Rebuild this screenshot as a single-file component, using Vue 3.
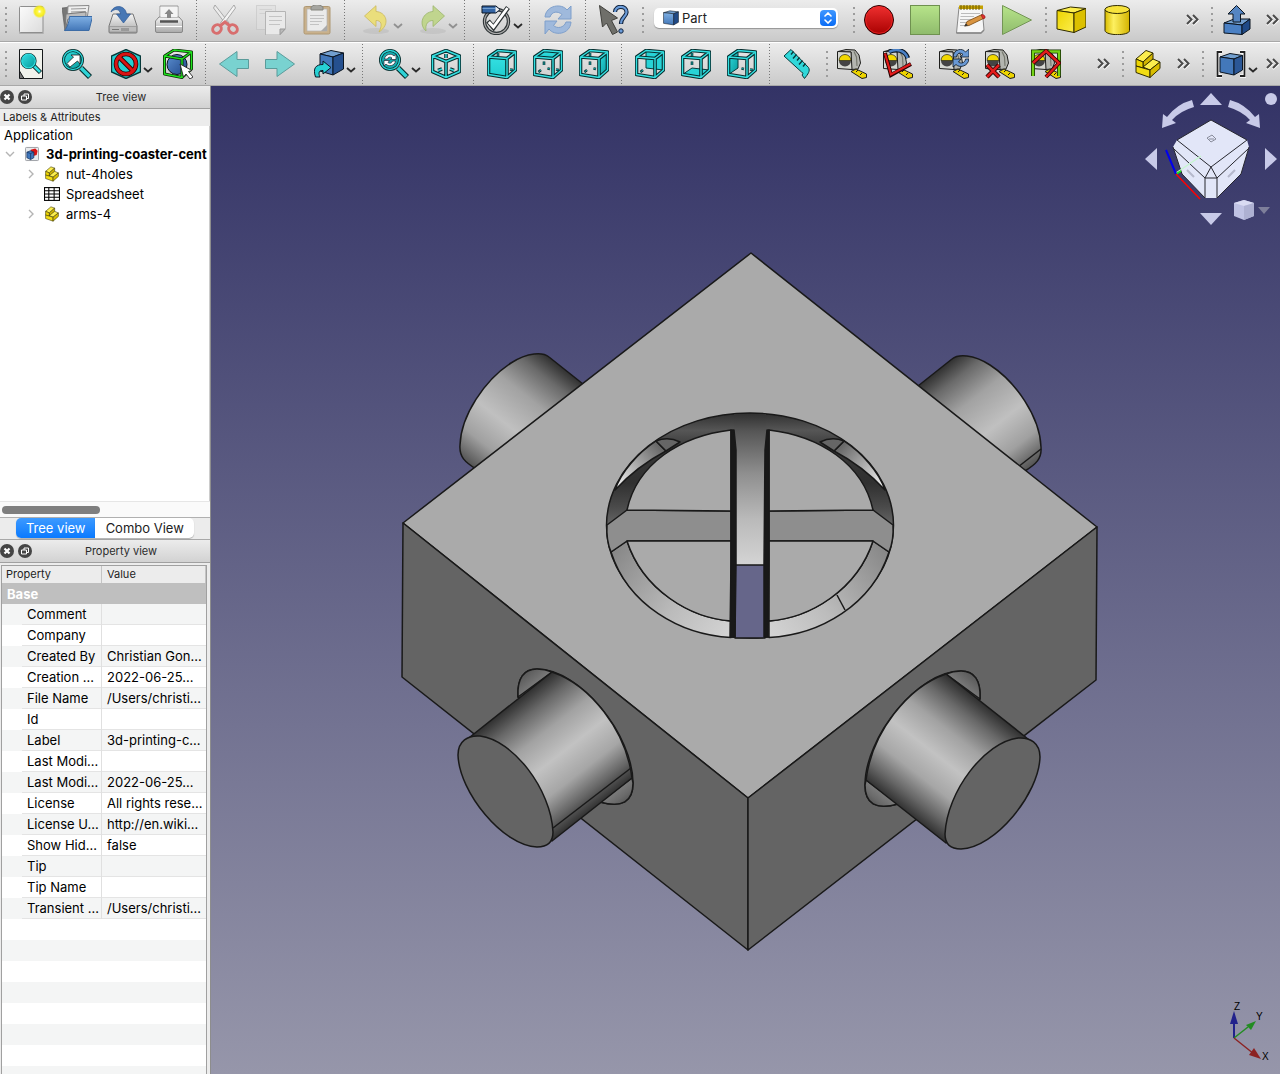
<script setup>
import { ref } from 'vue'

const workbench = ref('Part')
const activeTab = ref('Tree view')

const fileTools = [
  { type: 'handle' },
  { icon: 'new', label: 'New' },
  { icon: 'open', label: 'Open' },
  { icon: 'save', label: 'Save' },
  { icon: 'print', label: 'Print' },
  { type: 'sep' },
  { icon: 'cut', label: 'Cut' },
  { icon: 'copy', label: 'Copy' },
  { icon: 'paste', label: 'Paste' },
  { type: 'sep' },
  { icon: 'undo', label: 'Undo', menu: true, off: true },
  { icon: 'redo', label: 'Redo', menu: true, off: true },
  { type: 'sep' },
  { icon: 'validate', label: 'Edit mode', menu: true },
  { type: 'sep' },
  { icon: 'refresh', label: 'Refresh' },
  { type: 'sep' },
  { icon: 'whatsthis', label: "What's this?" },
  { type: 'handle' },
  { type: 'combo' },
  { type: 'handle' },
  { icon: 'record', label: 'Record macro' },
  { icon: 'stop', label: 'Stop macro' },
  { icon: 'macros', label: 'Macros' },
  { icon: 'play', label: 'Execute macro' },
  { type: 'handle' },
  { icon: 'box', label: 'Cube' },
  { icon: 'cylinder', label: 'Cylinder' },
  { type: 'spacer' },
  { type: 'more' },
  { type: 'handle', wide: true },
  { icon: 'extrude', label: 'Extrude' },
  { type: 'more' },
]

const viewTools = [
  { type: 'handle' },
  { icon: 'fitall', label: 'Fit all' },
  { icon: 'fitsel', label: 'Fit selection' },
  { icon: 'drawstyle', label: 'Draw style', menu: true },
  { icon: 'bbox', label: 'Bounding box' },
  { type: 'sep' },
  { icon: 'back', label: 'Back' },
  { icon: 'forward', label: 'Forward' },
  { icon: 'linked', label: 'Go to linked object', menu: true },
  { type: 'sep' },
  { icon: 'sync', label: 'Sync view', menu: true },
  { icon: 'iso', label: 'Isometric' },
  { type: 'sep' },
  { icon: 'face-front', label: 'Front' },
  { icon: 'face-top', label: 'Top' },
  { icon: 'face-right', label: 'Right' },
  { type: 'sep' },
  { icon: 'face-rear', label: 'Rear' },
  { icon: 'face-bottom', label: 'Bottom' },
  { icon: 'face-left', label: 'Left' },
  { type: 'sep' },
  { icon: 'ruler', label: 'Measure distance' },
  { type: 'handle' },
  { icon: 'linear', label: 'Measure linear' },
  { icon: 'angular', label: 'Measure angular' },
  { type: 'sep' },
  { icon: 'mrefresh', label: 'Refresh measurements' },
  { icon: 'mclear', label: 'Clear measurements' },
  { icon: 'mtoggle', label: 'Toggle measurements' },
  { type: 'spacer' },
  { type: 'more' },
  { type: 'handle', wide: true },
  { icon: 'part', label: 'Create part' },
  { type: 'more' },
  { type: 'handle', wide: true },
  { icon: 'compound', label: 'Compound', menu: true },
  { type: 'more' },
]

const bars = [fileTools, viewTools]

const cubeFaces = {
  front: '1.5,8 20,9.5 20,28.5 1.5,25.5',
  top: '1.5,8 20,9.5 28.5,3 11,1.5',
  right: '20,9.5 28.5,3 28.5,21 20,28.5',
  rear: '11,1.5 28.5,3 28.5,21 11,19',
  bottom: '1.5,25.5 20,28.5 28.5,21 11,19',
  left: '1.5,8 11,1.5 11,19 1.5,25.5',
}
const wire = 'M1.5 8L20 9.5V28.5L1.5 25.5ZM1.5 8L11 1.5L28.5 3L20 9.5M28.5 3V21L20 28.5'
const stubs = {
  front: 'M11 4V7M23 20.5L26 21',
  top: 'M11 12.5V16M5.5 23L8 21M14.500 19.500L17 20M23 20.5L26 21',
  right: 'M11 4V7M11 12.500V16M5.5 23L8 21M14.500 19.500L17 20',
  rear: 'M5.5 23L8 21',
  bottom: 'M11 4V7M11 12.500V16',
  left: 'M14.500 19.500L17 20M23 20.5L26 21',
}

const tree = [
  { name: 'nut-4holes', icon: 'part', open: true },
  { name: 'Spreadsheet', icon: 'sheet', open: false },
  { name: 'arms-4', icon: 'part', open: true },
]

const properties = [
  ['Comment', ''],
  ['Company', ''],
  ['Created By', 'Christian Gon...'],
  ['Creation ...', '2022-06-25...'],
  ['File Name', '/Users/christi...'],
  ['Id', ''],
  ['Label', '3d-printing-c...'],
  ['Last Modi...', ''],
  ['Last Modi...', '2022-06-25...'],
  ['License', 'All rights rese...'],
  ['License U...', 'http://en.wiki...'],
  ['Show Hid...', 'false'],
  ['Tip', ''],
  ['Tip Name', ''],
  ['Transient ...', '/Users/christi...'],
]
</script>

<template>
  <div class="app">
    <svg class="defs" width="0" height="0" aria-hidden="true">
      <defs>
        <linearGradient id="paper" x1="0" y1="0" x2="1" y2="1"><stop offset="0" stop-color="#fbfbfb" /><stop offset="1" stop-color="#dcdcdc" /></linearGradient>
        <radialGradient id="sun"><stop offset="0" stop-color="#fff" /><stop offset=".3" stop-color="#fdf74a" /><stop offset=".7" stop-color="#f6ec20" /><stop offset="1" stop-color="#f6ec20" stop-opacity="0" /></radialGradient>
        <linearGradient id="blueF" x1="0" y1="0" x2="0" y2="1"><stop offset="0" stop-color="#7fb0e4" /><stop offset="1" stop-color="#4377b8" /></linearGradient>
        <linearGradient id="blueD" x1="0" y1="0" x2="1" y2="1"><stop offset="0" stop-color="#5b8fd0" /><stop offset="1" stop-color="#20478a" /></linearGradient>
        <linearGradient id="metal" x1="0" y1="0" x2="0" y2="1"><stop offset="0" stop-color="#f4f4f4" /><stop offset="1" stop-color="#a9a9a9" /></linearGradient>
        <linearGradient id="redG" x1="0" y1="0" x2="0" y2="1"><stop offset="0" stop-color="#f03030" /><stop offset="1" stop-color="#a80000" /></linearGradient>
        <linearGradient id="greenG" x1="0" y1="0" x2="0" y2="1"><stop offset="0" stop-color="#b7e48a" /><stop offset="1" stop-color="#8fbb6c" /></linearGradient>
        <linearGradient id="yel" x1="0" y1="0" x2="1" y2="1"><stop offset="0" stop-color="#edd400" /><stop offset="1" stop-color="#fcee4e" /></linearGradient>
        <linearGradient id="yelC" x1="0" y1="0" x2="1" y2="0"><stop offset="0" stop-color="#d9bc00" /><stop offset=".35" stop-color="#fdf060" /><stop offset="1" stop-color="#d4b400" /></linearGradient>
        <linearGradient id="cy" x1="0" y1="0" x2="1" y2="1"><stop offset="0" stop-color="#34e0e2" /><stop offset="1" stop-color="#06989a" /></linearGradient>
        <linearGradient id="cyF" x1="0" y1="0" x2="0" y2="1"><stop offset="0" stop-color="#34e0e2" /><stop offset="1" stop-color="#1fcdd0" /></linearGradient>
      </defs>

      <symbol id="i-new" viewBox="0 0 30 30">
        <rect x="3" y="27" width="25" height="2" rx="1" fill="#999" opacity=".6" />
        <rect x="3.5" y="1.5" width="23.500" height="26" rx="1" fill="url(#paper)" stroke="#8e8e8e" />
        <circle cx="23.500" cy="6.500" r="6.800" fill="url(#sun)" />
      </symbol>
      <symbol id="i-open" viewBox="0 0 30 30">
        <path d="M0 3L8 2V22L3 26Z" fill="#777" stroke="#555" stroke-width=".6" />
        <path d="M6 1L27 0.500L25 14L5 20Z" fill="#eee" stroke="#888" />
        <path d="M9 4L24 3.500M9 7L23.500 6.500" stroke="#999" />
        <path d="M4 9L24 7V14H6L3 25Z" fill="#bdbdbd" stroke="#777" />
        <path d="M7.500 11.500H30.500L27 25.500H2.500C5 23 7 18 7.500 11.500Z" fill="url(#blueF)" stroke="#3d6ca6" />
      </symbol>
      <symbol id="i-save" viewBox="0 0 30 30">
        <path d="M5 9H25L29 21V27Q29 28 28 28H2Q1 28 1 27V21Z" fill="url(#metal)" stroke="#777" />
        <path d="M1.500 21.500H28.500V27H1.500Z" fill="#bdbdbd" stroke="#888" stroke-width=".6" />
        <path d="M14 23V26M16 23V26M18 23V26M20 23V26M4 24.500H11" stroke="#777" />
        <path d="M3 7C5 0 17 -1 18.500 9H22.500L15.500 18L8.500 9H12.500C12 4 7 3 3 7Z" fill="#4777b5" stroke="#2f5a96" stroke-width=".7" />
      </symbol>
      <symbol id="i-print" viewBox="0 0 30 30">
        <path d="M6 1H24V14H6Z" fill="#f6f6f6" stroke="#999" />
        <path d="M5 12H25L28.500 16V26Q28.500 27.500 27 27.500H3Q1.500 27.500 1.500 26V16Z" fill="url(#metal)" stroke="#888" />
        <path d="M6.500 12V2H23.500V12Z" fill="#f4f4f4" />
        <path d="M15 4L19.500 9H17V13H13V9H10.500Z" fill="#888" />
        <path d="M6 16.500H24" stroke="#555" stroke-width="2.500" />
        <path d="M2 21.500H28" stroke="#fff" />
      </symbol>
      <symbol id="i-cut" viewBox="0 0 30 30">
        <path d="M5 0L19 18L16.500 20L3.500 3Z" fill="#ececec" stroke="#999" stroke-width=".8" />
        <path d="M24 0L10.500 18L13 20L25.500 3Z" fill="#f4f4f4" stroke="#999" stroke-width=".8" />
        <g fill="none" stroke="#d86e6e" stroke-width="3"><ellipse cx="7" cy="24" rx="4.500" ry="4" transform="rotate(-40 7 24)" /><ellipse cx="23" cy="24" rx="4.500" ry="4" transform="rotate(40 23 24)" /><path d="M10.500 20.500L15 17L19.500 20.500" /></g>
      </symbol>
      <symbol id="i-copy" viewBox="0 0 30 30">
        <g stroke="#c4c4c4" fill="#e0e0e0"><rect x=".500" y=".500" width="19" height="24" opacity=".6" /><path d="M3.500 4.500H16M3.500 8.500H16" opacity=".5" /><path d="M9.500 6.500H29.500V24L24 30H9.500Z" fill="#e9e9e9" stroke="#b4b4b4" /><path d="M13 11.500H26M13 15.500H26M13 19.500H24" /><path d="M29 24H24V29.500Z" fill="#bbb" stroke="#999" /></g>
      </symbol>
      <symbol id="i-paste" viewBox="0 0 30 30">
        <rect x="2" y="1.500" width="26" height="27.500" rx="1.500" fill="#c9b18c" stroke="#ae9772" />
        <path d="M5 4H25V26H5Z" fill="#eaeaea" stroke="#b4b4b4" stroke-width=".7" /><path d="M25 20L19 26H25Z" fill="#aaa" />
        <path d="M8 10.500H22M8 13.500H22M8 16.500H20M8 19.500H17" stroke="#c2c2c2" />
        <path d="M9 5V2Q15 -3 21 2V5Z" fill="#a5a5a0" stroke="#85857f" />
      </symbol>
      <symbol id="i-undo" viewBox="0 0 30 30">
        <ellipse cx="15" cy="26" rx="13" ry="3" fill="#aaa" opacity=".3" />
        <path d="M3.500 11L15 .700V6.500C25 7 30 19 18 27C22 19 20 15.500 15 15.500V21.500Z" fill="#eade7c" stroke="#cbb95c" stroke-width=".8" />
      </symbol>
      <symbol id="i-redo" viewBox="0 0 30 30">
        <ellipse cx="17" cy="26" rx="13" ry="3" fill="#aaa" opacity=".3" />
        <path d="M28.500 11L17 .700V6.500C7 7 2 19 10 26C9 19 12 15.500 17 15.500V21.500Z" fill="#c0d58e" stroke="#9cb56c" stroke-width=".8" />
      </symbol>
      <symbol id="i-validate" viewBox="0 0 30 30">
        <circle cx="15.500" cy="16.500" r="12" fill="none" stroke="#2e3436" stroke-width="3.400" /><circle cx="15.500" cy="16.500" r="12" fill="none" stroke="#aaa" stroke-width="1.200" />
        <path d="M7 16L12.500 22.500L27 2.500" fill="none" stroke="#2e3436" stroke-width="4.800" /><path d="M7.800 17L12.500 22L26.500 3" fill="none" stroke="#fff" stroke-width="2.800" />
        <path d="M1 1H15L19 4.500L15 8H1Z" fill="#3465a4" stroke="#0b1521" /><path d="M1.500 3.500H14.500" stroke="#729fcf" /><path d="M14.500 1.500L18.500 4.500L14.500 7.500Z" fill="#eee" />
      </symbol>
      <symbol id="i-refresh" viewBox="0 0 30 30">
        <path d="M2 12C3 0 19 -2 24 5L28 1V14H15L19 9.500C15 6 9 6 7 12Z" fill="#9fb9dc" stroke="#7e9fcb" />
        <path d="M28 17C27 30 11 31 6 24L2 29V16H14L10.500 20.500C14 24 21 23 23 17Z" fill="#9fb9dc" stroke="#7e9fcb" />
      </symbol>
      <symbol id="i-whatsthis" viewBox="0 0 30 30">
        <path d="M.500 .500L18.500 13L12.500 15.500L18.500 27L13.500 29.500L7.500 18L3.500 22Z" fill="#6f6f6a" stroke="#40403c" />
        <path d="M16 7C16 0 28 0 27.500 7.500C27 12 22 12.500 22 19" fill="none" stroke="#12233c" stroke-width="4.200" /><path d="M16 7C16 0 28 0 27.500 7.500C27 12 22 12.500 22 18.500" fill="none" stroke="#6a9bd8" stroke-width="2.200" />
        <circle cx="22" cy="26" r="2.200" fill="#6a9bd8" stroke="#12233c" />
      </symbol>
      <symbol id="i-record" viewBox="0 0 30 30"><circle cx="15" cy="15" r="14.500" fill="url(#redG)" stroke="#280000" /><circle cx="15" cy="15" r="13.300" fill="none" stroke="#ef2929" opacity=".7" /></symbol>
      <symbol id="i-stop" viewBox="0 0 30 30"><rect x=".500" y=".500" width="29" height="29" fill="url(#greenG)" stroke="#6f9150" /></symbol>
      <symbol id="i-play" viewBox="0 0 30 30"><path d="M.500 .500L29.500 15L.500 29.500Z" fill="url(#greenG)" stroke="#749556" /></symbol>
      <symbol id="i-macros" viewBox="0 0 30 30">
        <path d="M3 2H26L28 25L25 28H.500Z" fill="#f6f6f6" stroke="#888" /><path d="M.500 28H25L28 25" fill="none" stroke="#888" stroke-width="1.500" />
        <path d="M3 .500H27V4H3Z" fill="#c4a000" /><path d="M5 0V5M8 0V5M11 0V5M14 0V5M17 0V5M20 0V5M23 0V5" stroke="#6b5800" />
        <path d="M5 8.500H24M4.500 11.500H18M4 14.500H16M4 17.500H12M4 20.500H9" stroke="#bbb" />
        <path d="M9 21L11 16.500L26 9.500L28.500 13L13 20.500Z" fill="#d99440" stroke="#7a4a12" stroke-width=".8" /><path d="M25 10L27 9.500Q30 11 29 13L27 14Z" fill="#e03030" stroke="#801010" stroke-width=".5" /><path d="M8 21.500L10 18.500L12 20.500Z" fill="#333" />
      </symbol>
      <symbol id="i-box" viewBox="0 0 30 30"><g stroke="#302b00" stroke-linejoin="round"><path d="M1 5.500L14.500 2L30 3.500L18 8Z" fill="#fcee4e" /><path d="M1 5.500L18 8V27.500L1 24Z" fill="url(#yel)" /><path d="M18 8L30 3.500V22L18 27.500Z" fill="#dcc000" /></g></symbol>
      <symbol id="i-cylinder" viewBox="0 0 30 30"><path d="M3 4.500V25.500C3.500 31 27.500 31 27.500 25.500V4.500Z" fill="url(#yelC)" stroke="#302b00" /><ellipse cx="15.250" cy="4.500" rx="12.250" ry="4" fill="#f7e33c" stroke="#302b00" /></symbol>
      <symbol id="i-extrude" viewBox="0 0 30 30"><g stroke="#0b1521" stroke-linejoin="round"><path d="M2 18L12 14H28L20 20Z" fill="#729fcf" /><path d="M2 18L20 20V29.500L2 28Z" fill="#4a80c4" /><path d="M20 20L28 14V24L20 29.500Z" fill="#204a87" /><path d="M14.500 .500L23 9H18.500V17H11V9H6Z" fill="#5585c2" /></g></symbol>

      <symbol id="i-fitall" viewBox="0 0 30 30"><path d="M3.500 .500H26.500V29.500H8L3.500 25Z" fill="#f0f2ec" stroke="#15181a" /><path d="M3.500 22L8 29.500H3.500Z" fill="#777" stroke="#15181a" /><path d="M17 16L24.500 23.500" stroke="#0b2a2b" stroke-width="4.500" /><path d="M17.500 16.500L24 23" stroke="#34e0e2" stroke-width="2.500" /><circle cx="12.500" cy="12" r="6.800" fill="#16a9ab" stroke="#042a2a" stroke-width="2.600" /><circle cx="12.500" cy="12" r="6.800" fill="url(#cy)" stroke="#34e0e2" stroke-width="1.200" /></symbol>
      <symbol id="i-fitsel" viewBox="0 0 30 30"><path d="M19 19L28 28" stroke="#042a2a" stroke-width="5.600" /><path d="M19 19L27.500 27.500" stroke="#2fd3d6" stroke-width="3.600" /><circle cx="11" cy="11" r="9.500" fill="url(#cy)" stroke="#042a2a" stroke-width="3" /><circle cx="11" cy="11" r="9.500" fill="none" stroke="#2bd6d8" stroke-width="1.400" /><path d="M5 14.500L11.500 8L9 6H18V15L15.500 12L8 18Z" fill="#fff" stroke="#222" stroke-width=".8" /></symbol>
      <symbol id="i-drawstyle" viewBox="0 0 30 30"><path d="M15 .500L29.500 7V23L15 29.500L.500 23V7Z" fill="#26cfd2" stroke="#06393a" stroke-width="1.400" /><circle cx="15" cy="15" r="10" fill="none" stroke="#280000" stroke-width="4.600" /><path d="M8 8L22 22" stroke="#280000" stroke-width="4.600" /><circle cx="15" cy="15" r="10" fill="none" stroke="#d81414" stroke-width="3" /><path d="M8 8L22 22" stroke="#d81414" stroke-width="3" /></symbol>
      <symbol id="i-bbox" viewBox="0 0 30 30"><circle cx="14" cy="15.500" r="10" fill="url(#blueD)" stroke="#0b1521" /><g fill="none" stroke-linejoin="round"><path d="M1.500 7L19 10V28.500L1.500 25ZM1.500 7L11 1L28.500 3L19 10M28.500 3V20L19 28.500" stroke="#0c2b05" stroke-width="3" /><path d="M1.500 7L19 10V28.500L1.500 25ZM1.500 7L11 1L28.500 3L19 10M28.500 3V20L19 28.500" stroke="#1fe51f" stroke-width="1.400" /></g><path d="M17 15L29 21.500L25.500 22.500L30 28L27 30L23 25L20.500 28Z" fill="#fff" stroke="#222" stroke-width=".9" /></symbol>
      <symbol id="i-back" viewBox="0 0 30 30"><path d="M.500 15L18 2.500V10.500H29.500V19.500H18V27.500Z" fill="#79d2d0" stroke="#5b9b9a" /></symbol>
      <symbol id="i-forward" viewBox="0 0 30 30"><path d="M29.500 15L12 2.500V10.500H.500V19.500H12V27.500Z" fill="#79d2d0" stroke="#5b9b9a" /></symbol>
      <symbol id="i-linked" viewBox="0 0 30 30"><g stroke="#0b1521" stroke-linejoin="round"><path d="M6 5L17 1.500L29.500 4L19 8Z" fill="#729fcf" /><path d="M6 5L19 8V26L6 22Z" fill="#4378ba" /><path d="M19 8L29.500 4V20L19 26Z" fill="#25508f" /><path d="M1.500 28C-1.500 19 2 15.500 9 15.500V12L17 18.500L9 25V21.500C5 21 4 24 6 28Z" fill="#27d1d4" /></g></symbol>
      <symbol id="i-sync" viewBox="0 0 30 30"><path d="M19 19L28 28" stroke="#042a2a" stroke-width="5.600" /><path d="M19 19L27.500 27.500" stroke="#2fd3d6" stroke-width="3.600" /><circle cx="11" cy="11" r="9.500" fill="#17aeb0" stroke="#042a2a" stroke-width="3" /><circle cx="11" cy="11" r="9.500" fill="none" stroke="#2bd6d8" stroke-width="1.400" /><path d="M5.500 10C6 5 13 4 15 7L17 5.500V10.500H11.500L13 9C11 7.500 9 8 8.500 10ZM16.500 12C16 17 9 18 7 15L5 17V11.500H10.500L9 13.500C11 15 13 14 13.500 12Z" fill="#fff" stroke="#223" stroke-width=".7" /></symbol>
      <symbol id="i-iso" viewBox="0 0 30 30"><g fill="none" stroke-linejoin="round"><path d="M15 1.500L28.500 7V22.500L15 28.500L1.500 22.500V7ZM1.500 7L15 12.500L28.500 7M15 12.500V28.500M15 5V9M7 21.500L11 20M19 20L23 21.500" stroke="#062e2f" stroke-width="3.600" /><path d="M15 1.500L28.500 7V22.500L15 28.500L1.500 22.500V7ZM1.500 7L15 12.500L28.500 7M15 12.500V28.500M15 5V9M7 21.500L11 20M19 20L23 21.500" stroke="#34e0e2" stroke-width="1.400" /></g></symbol>
      <symbol v-for="(pts, face) in cubeFaces" :id="'i-face-' + face" :key="face" viewBox="0 0 30 30">
        <polygon v-if="face === 'rear' || face === 'bottom' || face === 'left'" :points="pts" :fill="face === 'left' ? 'url(#cy)' : '#27d3d6'" stroke="#073a3b" />
        <g fill="none" stroke-linejoin="round">
          <path :d="stubs[face]" stroke="#062e2f" stroke-width="2.600" />
          <path :d="stubs[face]" stroke="#1aa5a7" />
        </g>
        <polygon v-if="face === 'front' || face === 'top' || face === 'right'" :points="pts" :fill="face === 'right' ? 'url(#cy)' : 'url(#cyF)'" />
        <g fill="none" stroke-linejoin="round">
          <path :d="wire" stroke="#062e2f" stroke-width="3.600" />
          <path :d="wire" stroke="#34e0e2" stroke-width="1.400" />
        </g>
      </symbol>
      <symbol id="i-ruler" viewBox="0 0 30 30"><path d="M8 .500L25.500 18.500C27.500 22 25 25 21.500 29.500L19 26C20.500 24.500 20 23.500 18.500 23L1 7Z" fill="#30d8da" stroke="#073a3b" /><path d="M10.500 2.500L8 5.500M13.500 5.500L10 9.500M16.500 8.500L14 11.500M19.500 11.500L16 15.500M22.500 14.500L20 17.500" stroke="#073a3b" stroke-width="1.400" /></symbol>
      <symbol id="i-linear" viewBox="0 0 30 30"><g stroke="#1e1e1c" stroke-linejoin="round"><path d="M1 2.500L9 .500L18 1L22 6L23.500 14L21 20L14 20.500V3Z" fill="#b3b5af" /><path d="M17 2.500L19.500 8L20 17" fill="none" stroke="#77796f" stroke-width="1.200" /><path d="M.500 2.500L14 3L15 20.500L.500 19.500Z" fill="#d6d8d2" /><path d="M14 22.500L19 20L29.500 25V28.500L25 29.500Z" fill="#edd400" /><path d="M19 23L21 21M23 26L25 24" /></g><circle cx="8" cy="11.500" r="6" fill="#444" /><path d="M2 11.500A6 6 0 0 1 14 11.500Z" fill="#f2d900" stroke="#1e1e1c" stroke-width=".6" /></symbol>
      <symbol id="i-angular" viewBox="0 0 30 30"><use href="#i-linear" /><path d="M6 3C13 -1 22 1 25 9" fill="none" stroke="#0b1521" stroke-width="4.500" /><path d="M6 3C13 -1 22 1 24.500 9" fill="none" stroke="#4a80c4" stroke-width="2.500" /><path d="M2 4L8 26L28 15" fill="none" stroke="#280000" stroke-width="4" /><path d="M2 4.500L8 25.500L27.500 15" fill="none" stroke="#e31b1b" stroke-width="2.200" /></symbol>
      <symbol id="i-mrefresh" viewBox="0 0 30 30"><use href="#i-linear" /><g fill="#6898d4" stroke="#0b1521" stroke-width=".8"><path d="M14 8C15 -1 24 -1 26.500 3L30 0V8H21L24 5.500C21 3 18 4 17.500 8Z" /><path d="M30 10C29 18 20 19 17 15.500L14 18V10H22L19.500 13C22 15 26 14 26.500 10Z" /></g></symbol>
      <symbol id="i-mclear" viewBox="0 0 30 30"><use href="#i-linear" /><path d="M2 16L14 28M14 16L2 28" stroke="#280000" stroke-width="4.500" /><path d="M2 16L14 28M14 16L2 28" stroke="#e31b1b" stroke-width="2.500" /></symbol>
      <symbol id="i-mtoggle" viewBox="0 0 30 30"><use href="#i-linear" /><path d="M2 27V2.500H28V27" fill="none" stroke="#173004" stroke-width="4" /><path d="M2 27V2.500H28V27" fill="none" stroke="#73d216" stroke-width="2.400" /><path d="M2 14L15 2L28 14L15 28" fill="none" stroke="#280000" stroke-width="4" /><path d="M2 14L15 2L28 14L15 28" fill="none" stroke="#e31b1b" stroke-width="2.400" /></symbol>
      <symbol id="i-part" viewBox="0 0 30 30"><g stroke="#302b00" stroke-linejoin="round"><path d="M3 10L13 1.500L20 4L10 13Z" fill="#fcee4e" /><path d="M20 4V10L10 19V13Z" fill="#d3b600" /><path d="M3 10L10 13V19L3 17Z" fill="#edd400" /><path d="M10 18L20 10L27 13L17 21Z" fill="#fcee4e" /><path d="M3 17L17 21V28.500L3 23.500Z" fill="#f2dc14" /><path d="M17 21L27 13V19.500L17 28.500Z" fill="#d9bd00" /></g></symbol>
      <symbol id="i-bluebox" viewBox="0 0 30 30"><g stroke="#0b1521" stroke-linejoin="round"><path d="M1 5L13 1.500L29 3.500L20 7Z" fill="#729fcf" /><path d="M1 5L20 7V28L1 25Z" fill="url(#blueF)" /><path d="M20 7L29 3.500V23L20 28Z" fill="#204a87" /></g></symbol>
      <symbol id="i-compound" viewBox="0 0 30 30"><path d="M6 3H1.500V27H6M24 3H28.500V27H24" fill="none" stroke="#fff" stroke-width="3.600" /><path d="M6 3H1.500V27H6M24 3H28.500V27H24" fill="none" stroke="#222" stroke-width="1.800" /><g stroke="#0b1521" stroke-linejoin="round"><path d="M4 8L14 4.500L26.500 6.500L18 10Z" fill="#729fcf" /><path d="M4 8L18 10V26L4 23Z" fill="#4378ba" /><path d="M18 10L26.500 6.500V21L18 26Z" fill="#2b5796" /></g></symbol>
      <symbol id="i-sheet" viewBox="0 0 30 30"><rect x="1" y="3" width="28" height="24" fill="#fff" stroke="#000" stroke-width="2" /><path d="M1 9H29M1 15H29M1 21H29M9 3V27M19 3V27" stroke="#000" stroke-width="2" /></symbol>
      <symbol id="i-doc" viewBox="0 0 30 30"><rect x="1" y="1" width="28" height="28" rx="2" fill="#e9ebee" stroke="#9a9da2" stroke-width="2" /><path d="M12 6L22 3L27 8L25 17L16 20Z" fill="#d81414" /><path d="M4 11L12 8L19 11V23L12 27L4 23Z" fill="#3f76bb" stroke="#12305c" stroke-width="1.500" /><path d="M4 11L12 14L19 11M12 14V27" stroke="#12305c" fill="none" stroke-width="1.500" /></symbol>
    </svg>

    <header class="bars">
      <div v-for="(bar, b) in bars" :key="b" class="bar" role="toolbar">
        <template v-for="(t, i) in bar" :key="i">
          <span v-if="t.type === 'handle'" class="handle" :class="{ wide: t.wide }"><i v-for="n in 5" :key="n"></i></span>
          <span v-else-if="t.type === 'sep'" class="sep"></span>
          <span v-else-if="t.type === 'spacer'" class="spacer"></span>
          <button v-else-if="t.type === 'more'" class="more" aria-label="More tools">
            <svg width="13" height="12" viewBox="0 0 13 12"><path d="M1 1L6 5.500L1 10M7 1L12 5.500L7 10" fill="none" stroke="#fff" stroke-width="2" transform="translate(0 1)" /><path d="M1 1L5.500 5.500L1 10M7 1L11.500 5.500L7 10" fill="none" stroke="#4a4a4a" stroke-width="2" /></svg>
          </button>
          <label v-else-if="t.type === 'combo'" class="combo">
            <svg class="combo-icon"><use href="#i-bluebox" /></svg>
            <select v-model="workbench" aria-label="Workbench">
              <option>Part</option>
              <option>Part Design</option>
            </select>
            <span class="knob"><svg width="8" height="12" viewBox="0 0 8 12"><path d="M1 4L4 1L7 4M1 8L4 11L7 8" fill="none" stroke="#fff" stroke-width="1.600" stroke-linecap="round" /></svg></span>
          </label>
          <button v-else class="tool" :class="{ menu: t.menu, off: t.off }" :aria-label="t.label">
            <svg class="glyph"><use :href="'#i-' + t.icon" /></svg>
            <svg v-if="t.menu" class="caret" viewBox="0 0 10 6"><path d="M1 1L5 4.500L9 1" fill="none" stroke="#2a2a2a" stroke-width="1.800" /></svg>
          </button>
        </template>
      </div>
    </header>

    <main class="work">
      <aside class="side">
        <section class="dock tree-dock">
          <div class="title">
            <button class="round" aria-label="Close"><svg viewBox="0 0 14 14"><circle cx="7" cy="7" r="7" fill="#454545" /><path d="M4.500 4.500L9.500 9.500M9.500 4.500L4.500 9.500" stroke="#fff" stroke-width="2.200" /></svg></button>
            <button class="round" aria-label="Float"><svg viewBox="0 0 14 14"><circle cx="7" cy="7" r="7" fill="#454545" /><path d="M6 6V4H10.500V8.500H8.500M3.500 6H8.500V10H3.500Z" fill="none" stroke="#fff" /></svg></button>
            <h2>Tree view</h2>
          </div>
          <div class="tree-head">Labels &amp; Attributes</div>
          <div class="tree">
            <div class="node root">Application</div>
            <div class="node doc">
              <svg class="twist" viewBox="0 0 10 10"><path d="M1 3L5 7L9 3" fill="none" stroke="#b4b4b4" stroke-width="1.400" /></svg>
              <svg class="mini"><use href="#i-doc" /></svg><b>3d-printing-coaster-cent</b>
            </div>
            <div v-for="n in tree" :key="n.name" class="node child">
              <svg class="twist" viewBox="0 0 10 10"><path v-if="n.open" d="M3 1L7 5L3 9" fill="none" stroke="#b4b4b4" stroke-width="1.400" /></svg>
              <svg class="mini"><use :href="'#i-' + n.icon" /></svg><span>{{ n.name }}</span>
            </div>
          </div>
          <div class="scroll"><span></span></div>
          <div class="tabs">
            <button v-for="tab in ['Tree view', 'Combo View']" :key="tab" :class="{ on: tab === activeTab }" @click="activeTab = tab">{{ tab }}</button>
          </div>
        </section>

        <section class="dock prop-dock">
          <div class="title">
            <button class="round" aria-label="Close"><svg viewBox="0 0 14 14"><circle cx="7" cy="7" r="7" fill="#454545" /><path d="M4.500 4.500L9.500 9.500M9.500 4.500L4.500 9.500" stroke="#fff" stroke-width="2.200" /></svg></button>
            <button class="round" aria-label="Float"><svg viewBox="0 0 14 14"><circle cx="7" cy="7" r="7" fill="#454545" /><path d="M6 6V4H10.500V8.500H8.500M3.500 6H8.500V10H3.500Z" fill="none" stroke="#fff" /></svg></button>
            <h2>Property view</h2>
          </div>
          <div class="sheet">
            <table>
              <thead><tr><th>Property</th><th>Value</th></tr></thead>
              <tbody>
                <tr class="group"><th colspan="2">Base</th></tr>
                <tr v-for="(p, i) in properties" :key="i">
                  <td><span>{{ p[0] }}</span></td>
                  <td>{{ p[1] }}</td>
                </tr>
              </tbody>
            </table>
            <div class="rest"></div>
          </div>
        </section>
      </aside>

      <section class="view">
        <svg class="scene" viewBox="211 86 1069 988" role="img" aria-label="3D model">
          <defs>
            <linearGradient id="cylBack" gradientUnits="userSpaceOnUse" x1="566" y1="370" x2="484" y2="474"><stop offset="0" stop-color="#303030" /><stop offset=".14" stop-color="#6a6a6a" /><stop offset=".34" stop-color="#a2a2a2" /><stop offset=".6" stop-color="#c0c0c0" /><stop offset=".82" stop-color="#a0a0a0" /><stop offset="1" stop-color="#585858" /></linearGradient>
            <linearGradient id="cylFront" gradientUnits="userSpaceOnUse" x1="472" y1="735" x2="554" y2="840"><stop offset="0" stop-color="#303030" /><stop offset=".14" stop-color="#686868" /><stop offset=".32" stop-color="#a2a2a2" /><stop offset=".52" stop-color="#c2c2c2" /><stop offset=".72" stop-color="#a6a6a6" /><stop offset=".88" stop-color="#666" /><stop offset="1" stop-color="#303030" /></linearGradient>
            <linearGradient id="bore" x1="0" y1="0" x2="1" y2="1"><stop offset="0" stop-color="#4a4a4a" /><stop offset="1" stop-color="#a2a2a2" /></linearGradient>
            <linearGradient id="boreLow" x1="0" y1="0" x2="1" y2="1"><stop offset="0" stop-color="#a2a2a2" /><stop offset=".7" stop-color="#6a6a6a" /><stop offset="1" stop-color="#444" /></linearGradient>
            <linearGradient id="slot" gradientUnits="userSpaceOnUse" x1="0" y1="413" x2="0" y2="565"><stop offset="0" stop-color="#303030" /><stop offset=".12" stop-color="#565656" /><stop offset=".4" stop-color="#8f8f8f" /><stop offset=".7" stop-color="#bababa" /><stop offset="1" stop-color="#d4d4d4" /></linearGradient>
            <linearGradient id="ringTop" gradientUnits="userSpaceOnUse" x1="0" y1="413" x2="0" y2="530"><stop offset="0" stop-color="#303030" /><stop offset=".15" stop-color="#565656" /><stop offset=".3" stop-color="#383838" /><stop offset=".6" stop-color="#303030" /><stop offset=".8" stop-color="#4a4a4a" /><stop offset="1" stop-color="#6c6c6c" /></linearGradient>
            <linearGradient id="ringLow" gradientUnits="userSpaceOnUse" x1="611" y1="545" x2="731" y2="635"><stop offset="0" stop-color="#848484" /><stop offset=".6" stop-color="#bcbcbc" /><stop offset="1" stop-color="#d4d4d4" /></linearGradient>
            <linearGradient id="lens" gradientUnits="userSpaceOnUse" x1="618" y1="485" x2="662" y2="445"><stop offset="0" stop-color="#ececec" /><stop offset="1" stop-color="#606060" /></linearGradient>
          </defs>
          <g stroke="#191919" stroke-width="1.500" stroke-linejoin="round">
            <g id="backArm"><path d="M583 384L549 357C543 352 528 352 511 363C485 380 461 415 460 445C459 457 465 462 476 469L540 440Z" fill="url(#cylBack)" /></g>
            <use href="#backArm" transform="translate(1501 2) scale(-1 1)" />
            <path d="M1041 449L1018 467" fill="none" />
            <path d="M751 253L1097 527L748 798L403 523Z" fill="#aaa" />
            <path d="M403 523L748 798V950L402 677Z" fill="#646464" />
            <path d="M748 798L1097 527L1096 680L748 950Z" fill="#646464" />

            <g id="frontArm">
              <path d="M518 697C517 678 524 669 537 669C580 669 633 735 633 783C633 802 622 808 600 802Z" fill="#646464" />
              <path d="M518 697C517 678 524 669 537 669Q545 669 552 672Z" fill="url(#bore)" />
              <path d="M600 802C622 808 633 802 633 783L632 778Z" fill="url(#boreLow)" />
              <path d="M470 737L552 672C590 685 626 730 632 778L552 841Z" fill="url(#cylFront)" />
              <path d="M458 755C458 741 468 735 480 736C513 740 551 789 553 832C553 842 547 847 537 847C503 846 459 792 458 755Z" fill="#646464" />
            </g>
            <use href="#frontArm" transform="translate(1498 2) scale(-1 1)" />
            <path d="M553 828L631 768" fill="none" />

            <ellipse cx="750" cy="525.500" rx="143.500" ry="112.500" fill="url(#ringTop)" />
            <g id="ringHalf">
              <path d="M611 552C628 605 680 635 731 637.500V621C690 618 643 590 627 541Z" fill="url(#ringLow)" />
              <path d="M607 525L627 510L731 511V541L627 541L611 552Q606 540 607 525Z" fill="#8e8e8e" />
              <path d="M731 430C680 436 637 464 627 510L731 511Z" fill="#aaa" />
              <path d="M627 541C643 590 690 618 731 621V541Z" fill="#aaa" />
              <path d="M615 490C621 472 638 453 656 441L666 451C645 462 628 476 615 490Z" fill="url(#lens)" />
              <path d="M656 441Q668 436 680 442L666 451Z" fill="#666" />
            </g>
            <use href="#ringHalf" transform="translate(1500 0) scale(-1 1)" />
            <path d="M837 595L845 610" />
            <path d="M734 414H766V565H734Z" fill="url(#slot)" stroke="none" />
            <path d="M735 565H765V638H735Z" fill="#66668a" />
            <path d="M731 430L734 430L736 450V565L735 637H730L731 560Z" fill="#191919" />
            <path d="M769 430L767 430L765 450L764 565V637H768L769 560Z" fill="#191919" />
          </g>
        </svg>

        <svg class="navcube" width="150" height="150" viewBox="1130 84 150 150" role="img" aria-label="Navigation cube">
          <g fill="#c8cae8">
            <path d="M1200 105L1211 93L1222 105ZM1200 213H1222L1211 225ZM1145 159L1157 148V170ZM1265 148L1277 159L1265 170Z" />
            <circle cx="1271" cy="99" r="6" />
            <path d="M1192 100L1194 107Q1180 111 1172 120L1176 123L1162 128L1163 114L1167 117Q1177 104 1192 100Z" />
            <path d="M1230 100L1228 107Q1242 111 1250 120L1246 123L1260 128L1259 114L1255 117Q1245 104 1230 100Z" />
          </g>
          <path d="M1211 120L1247 140L1249 147L1241 174L1217 198H1205L1182 174L1173 147L1177 140Z" fill="#e2e6f8" />
          <path d="M1177 140L1211 167L1247 140M1174 149L1205 178M1248 149L1217 178M1211 120L1177 140M1211 120L1247 140M1173 147L1182 174L1205 198V178L1211 167L1217 178V198L1241 174L1249 147M1205 178H1217" fill="none" stroke="#26262e" stroke-linejoin="round" />
          <path d="M1207 138L1212 135L1216 139L1211 142ZM1209 139H1214" fill="none" stroke="#888b9a" />
          <path d="M1187 170L1194 177M1228 177L1235 170" stroke="#b6b9cc" stroke-width="2" />
          <path d="M1176 173L1201 156" stroke="#c6f7cf" stroke-width="1.500" /><path d="M1176 174L1181 171" stroke="#1ee21e" stroke-width="2" />
          <path d="M1166 150L1176 174" stroke="#0000ee" stroke-width="2" /><path d="M1176 174L1200 199" stroke="#f00" stroke-width="1.500" />
          <path d="M1234 203L1244 200L1254 203V216L1244 220L1234 216Z" fill="#c0c3e4" /><path d="M1234 203L1244 206L1254 203L1244 200Z" fill="#d9dbf2" /><path d="M1244 206L1254 203V216L1244 220Z" fill="#aeb1d2" />
          <path d="M1258 207H1270L1264 214Z" fill="#7e7f9a" />
        </svg>

        <svg class="axes" width="70" height="84" viewBox="1210 990 70 84" role="img" aria-label="Axis cross">
          <path d="M1234 1038V1020" stroke="#22228c" stroke-width="2" /><path d="M1234 1011L1238 1024H1230Z" fill="#22228c" />
          <path d="M1234 1038L1248 1027" stroke="#228c22" stroke-width="1.500" /><path d="M1256 1021L1251 1030L1246 1025Z" fill="#228c22" />
          <path d="M1234 1038L1254 1054" stroke="#8c2222" stroke-width="1.500" /><path d="M1261 1059L1249 1055L1254 1048Z" fill="#8c2222" />
          <text x="1234" y="1010">Z</text><text x="1256" y="1020">Y</text><text x="1262" y="1060">X</text>
        </svg>
      </section>
    </main>
  </div>
</template>

<style>
html, body { margin: 0; background: #ececec; }
</style>

<style scoped>
.app { display: flex; flex-direction: column; min-height: 100vh; font-family: Inter, "Liberation Sans", sans-serif; font-size: 13px; color: #000; }
.defs { position: absolute; }
button { border: 0; padding: 0; margin: 0; background: none; font: inherit; color: inherit; }
.bar { display: flex; align-items: center; box-sizing: border-box; height: 42px; padding-bottom: 1px; overflow: hidden; background: linear-gradient(#ececec, #cacaca); border-bottom: 1px solid #a8a8a8; }
.bar + .bar { border-top: 1px solid #fff; height: 44px; padding-bottom: 0; }
.handle { flex: none; width: 8px; box-sizing: border-box; padding-left: 5px; display: flex; flex-direction: column; gap: 4px; }
.handle.wide { width: 14px; padding-left: 11px; }
.handle i { width: 2px; height: 2px; background: #9c9c9c; }
.sep { flex: none; width: 10px; height: 40px; background: repeating-linear-gradient(#777 0 1px, transparent 1px 3px) 4px 0 / 1px 100% no-repeat; }
.spacer { flex: 1; }
.tool { flex: none; width: 46px; height: 40px; display: flex; align-items: center; justify-content: center; }
.tool.menu { width: 55px; justify-content: flex-start; padding-left: 11px; }
.glyph { flex: none; width: 30px; height: 30px; overflow: visible; }
.caret { flex: none; width: 10px; height: 6px; margin: 12px 0 0 2px; }
.off .caret { opacity: .4; }
.more { flex: none; width: 20px; padding-left: 6px; display: flex; }
.combo { flex: none; display: flex; align-items: center; width: 184px; height: 20px; box-sizing: border-box; margin: 0 10px 4px 9px; padding: 0 2px 0 8px; background: #fff; border-radius: 5px; box-shadow: 0 1px 1px rgba(0, 0, 0, .3); }
.combo-icon { width: 18px; height: 16px; }
.combo select { flex: 1; appearance: none; border: 0; background: none; font: inherit; padding: 0 0 0 2px; color: #222; }
.knob { width: 16px; height: 16px; border-radius: 4px; background: linear-gradient(#3f97ff, #0a6cf5); display: flex; align-items: center; justify-content: center; }

.work { flex: 1; display: flex; min-height: 0; }
.side { flex: 0 0 210px; width: 210px; display: flex; flex-direction: column; border-right: 1px solid #8d8d8d; background: #ececec; }
.dock { display: flex; flex-direction: column; min-height: 0; }
.tree-dock { flex: 454 1 0; }
.prop-dock { flex: 534 1 0; }
.title { display: flex; align-items: center; gap: 4px; height: 22px; padding-right: 4px; background: linear-gradient(#ececec, #d2d2d2); border-bottom: 1px solid #a0a0a0; }
.round { flex: none; width: 14px; height: 14px; display: flex; }
.round svg { width: 14px; height: 14px; }
.title h2 { flex: 1; margin: 0; font-size: 11px; font-weight: 400; text-align: center; color: #2c2c2c; }
.tree-head { padding-left: 3px; height: 17px; line-height: 17px; font-size: 11px; color: #222; background: #ececec; }
.tree { flex: 1; background: #fff; overflow: hidden; border-right: 1px solid #ccc; }
.node { display: flex; align-items: center; height: 20px; white-space: nowrap; }
.root { padding-left: 4px; height: 18px; }
.doc { padding-left: 5px; }
.child { padding-left: 26px; }
.twist { flex: none; width: 10px; height: 10px; }
.mini { flex: none; width: 16px; height: 16px; margin: 0 6px 0 8px; }
.doc .mini { width: 14px; margin: 0 7px 0 10px; }
.scroll { height: 15px; display: flex; align-items: center; padding-left: 2px; background: #fafafa; border-top: 1px solid #e6e6e6; border-bottom: 1px solid #b0b0b0; }
.scroll span { width: 47%; height: 8px; border-radius: 4px; background: #7f7f7f; }
.tabs { display: flex; height: 21px; padding: 0 16px; border-bottom: 1px solid #a8a8a8; }
.tabs button { height: 20px; flex: 98 1 0; background: #fff; border-radius: 0 5px 5px 0; box-shadow: 0 1px 1px rgba(0, 0, 0, .25); color: #222; }
.tabs button.on { flex: 79 1 0; border-radius: 5px 0 0 5px; background: linear-gradient(#3d9aff, #0a7aff); color: #fff; }
.sheet { flex: 1; display: flex; flex-direction: column; margin: 2px 3px 0 1px; border: 1px solid #a0a0a0; border-bottom: 0; background: #fff; }
table { width: 100%; table-layout: fixed; border-collapse: separate; border-spacing: 0; }
th, td { box-sizing: border-box; padding: 0 0 0 5px; text-align: left; font-weight: 400; white-space: nowrap; overflow: hidden; }
thead th { height: 17px; line-height: 17px; font-size: 11px; background: #ececec; color: #222; border-right: 1px solid #c4c4c4; }
thead th:first-child { width: 100px; padding-left: 4px; }
.group th { height: 21px; font-weight: 700; color: #fff; background: #bfbfbf; }
td { height: 21px; line-height: 20px; border-bottom: 1px solid #e4e4e4; }
tbody tr:nth-child(even) { background: #f4f5f5; }
td:first-child { padding-left: 20px; border-bottom: 0; border-right: 1px solid #e0e0e0; }
td:first-child span { display: block; height: 20px; padding-left: 5px; border-bottom: 1px solid #e4e4e4; }
.rest { flex: 1; background: repeating-linear-gradient(#fff 0 21px, #f4f5f5 21px 42px); }

.view { flex: 1; position: relative; min-width: 0; background: linear-gradient(#333366, #9696aa); }
.scene { position: absolute; inset: 0; width: 100%; height: 100%; }
.navcube { position: absolute; right: 0; top: -2px; }
.axes { position: absolute; right: 0; bottom: 0; }
.axes text { font: 10px "Liberation Sans", sans-serif; fill: #000; }
</style>
